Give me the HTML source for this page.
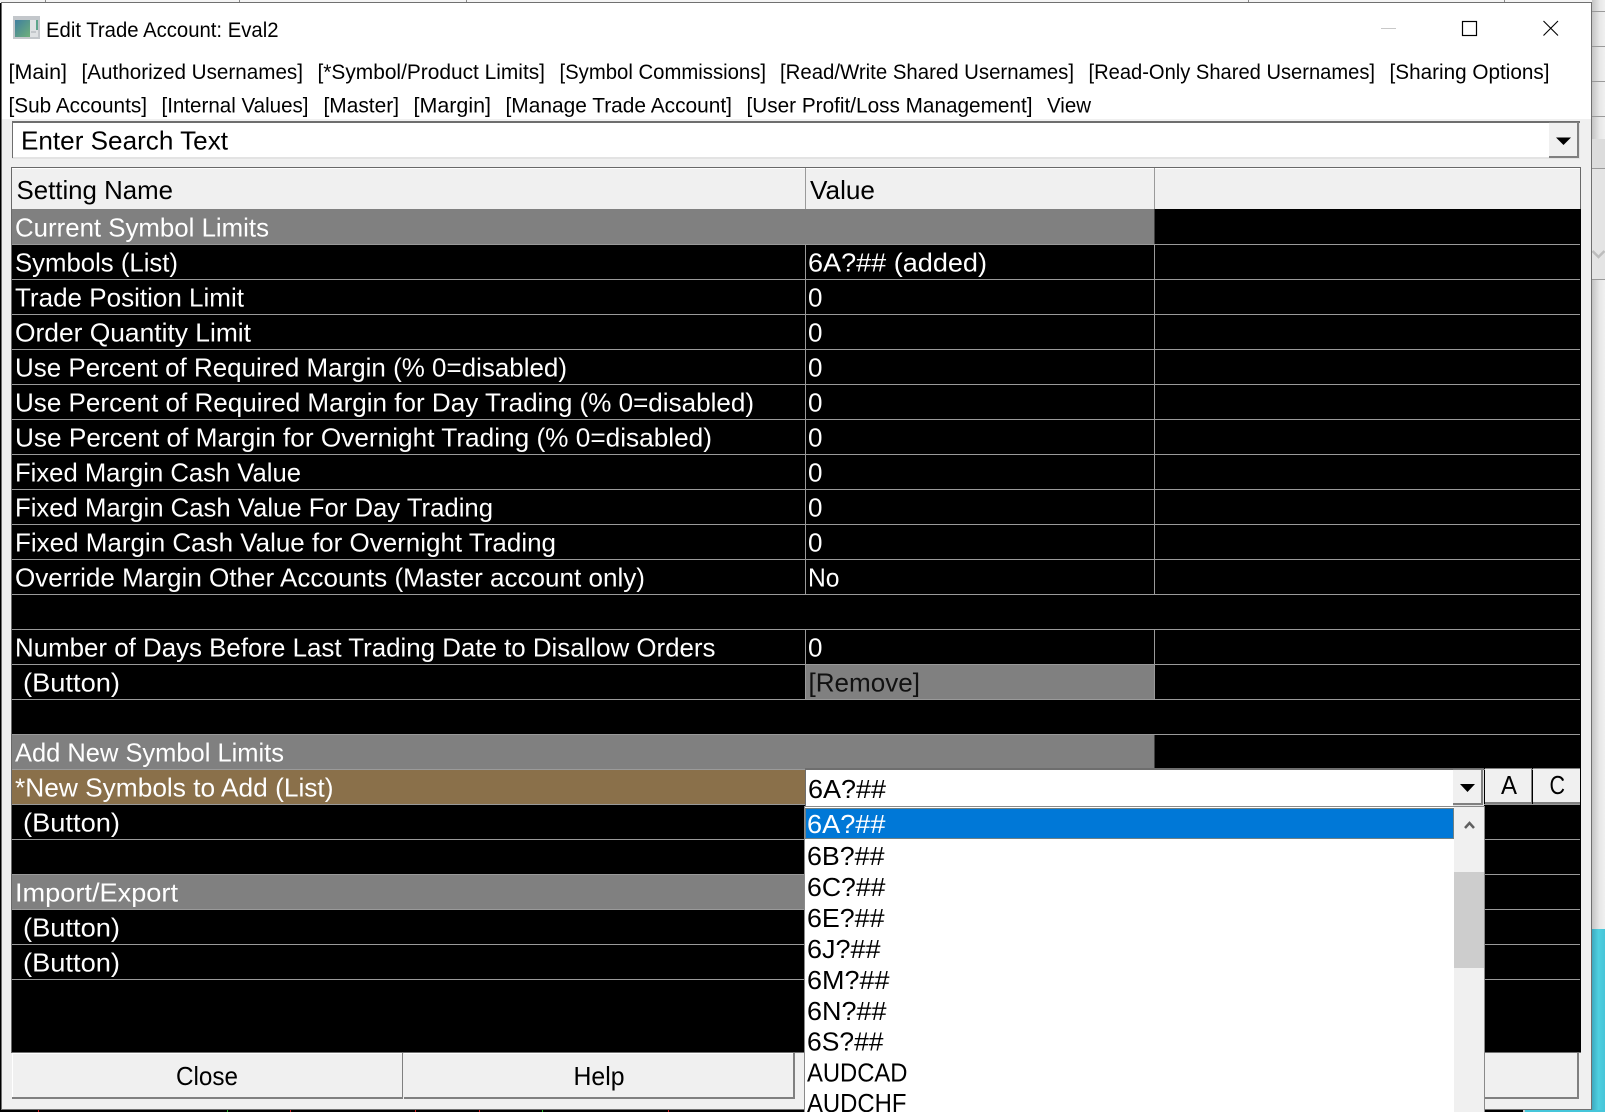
<!DOCTYPE html>
<html><head><meta charset="utf-8"><title>Edit Trade Account: Eval2</title>
<style>
html,body{margin:0;padding:0;background:#000;width:1605px;height:1112px;overflow:hidden}
svg{display:block}
text{font-family:"Liberation Sans",sans-serif;white-space:pre}
.m{font-size:21.500px;fill:#000}
.r{font-size:26px;fill:#fff}
.b{font-size:26px;fill:#000}
</style></head><body>
<svg width="1605" height="1112" viewBox="0 0 1605 1112" xmlns="http://www.w3.org/2000/svg">
<defs>
<linearGradient id="ic" x1="0" y1="0" x2="1" y2="1"><stop offset="0" stop-color="#3f7f9f"/><stop offset="1" stop-color="#6fb07a"/></linearGradient>
<linearGradient id="sh" x1="0" y1="0" x2="1" y2="0"><stop offset="0" stop-color="#c4c4c4"/><stop offset=".6" stop-color="#e8e8e8"/><stop offset="1" stop-color="#f0f0f0"/></linearGradient>
<linearGradient id="te" x1="0" y1="0" x2="1" y2="0"><stop offset="0" stop-color="#3ea9bf"/><stop offset=".5" stop-color="#4fd0e0"/><stop offset="1" stop-color="#46c4d8"/></linearGradient>
</defs>
<!-- background -->
<rect width="1605" height="1112" fill="#000"/>
<rect x="0" y="0" width="1605" height="3" fill="#f4f4f4"/>
<rect x="45" y="0" width="1" height="3" fill="#888"/><rect x="239" y="0" width="1" height="3" fill="#888"/><rect x="466" y="0" width="1" height="3" fill="#888"/><rect x="1248" y="0" width="1" height="3" fill="#888"/><rect x="1504" y="0" width="1" height="3" fill="#888"/>
<rect x="1592" y="0" width="13" height="929" fill="url(#sh)"/>
<rect x="1592" y="139" width="13" height="29" fill="#dcdcdc"/>
<rect x="1592" y="168" width="13" height="111" fill="#e4e4e4"/>
<g fill="#999"><rect x="1592" y="11" width="13" height="1"/><rect x="1592" y="46" width="13" height="1"/><rect x="1592" y="81" width="13" height="1"/><rect x="1592" y="116" width="13" height="1"/><rect x="1592" y="168" width="13" height="1"/><rect x="1592" y="279" width="13" height="1"/></g>
<path d="M1592.500 251 L1598.500 257 L1604.500 251" fill="none" stroke="#bdbdbd" stroke-width="2.500"/>
<rect x="1592" y="929" width="13" height="183" fill="url(#te)"/>
<rect x="1525" y="1110" width="80" height="2" fill="#45c6da"/>
<rect x="1523" y="1110" width="2" height="2" fill="#ccc"/>
<rect x="38" y="1110" width="1" height="2" fill="#d22"/><rect x="227" y="1110" width="1" height="2" fill="#2b2"/><rect x="290" y="1110" width="1" height="2" fill="#d22"/><rect x="415" y="1110" width="1" height="2" fill="#d22"/><rect x="479" y="1110" width="1" height="2" fill="#d22"/><rect x="542" y="1110" width="1" height="2" fill="#2b2"/><rect x="668" y="1110" width="1" height="2" fill="#d22"/>
<!-- window -->
<rect x="1" y="2" width="1591" height="1108" fill="#707070"/>
<rect x="2" y="3" width="1589" height="1106" fill="#f0f0f0"/>
<rect x="2" y="3" width="1589" height="116" fill="#fff"/>
<!-- icon -->
<rect x="13" y="16" width="27" height="23" fill="#c3c7cb"/>
<rect x="15" y="20" width="15" height="17" fill="url(#ic)"/>
<rect x="30" y="20" width="8" height="17" fill="#dfe2e4"/>
<rect x="36" y="20" width="2" height="10" fill="#5da58c"/>
<rect x="31" y="31" width="5" height="2" fill="#c3c7cb"/>
<text class="m" x="46" y="37" textLength="232.500" lengthAdjust="spacingAndGlyphs">Edit Trade Account: Eval2</text>
<!-- caption buttons -->
<rect x="1381" y="28" width="15" height="1" fill="#c8c8c8"/>
<rect x="1462.500" y="21.500" width="14" height="14" fill="none" stroke="#000" stroke-width="1.200"/>
<path d="M1543.500 21 L1558 35.500 M1558 21 L1543.500 35.500" stroke="#000" stroke-width="1.100" fill="none"/>
<!-- menus -->
<text class="m" x="8.500" y="79" textLength="58.500" lengthAdjust="spacingAndGlyphs">[Main]</text>
<text class="m" x="81.500" y="79" textLength="221.500" lengthAdjust="spacingAndGlyphs">[Authorized Usernames]</text>
<text class="m" x="317.500" y="79" textLength="227.500" lengthAdjust="spacingAndGlyphs">[*Symbol/Product Limits]</text>
<text class="m" x="559.500" y="79" textLength="206.500" lengthAdjust="spacingAndGlyphs">[Symbol Commissions]</text>
<text class="m" x="780" y="79" textLength="294" lengthAdjust="spacingAndGlyphs">[Read/Write Shared Usernames]</text>
<text class="m" x="1088.500" y="79" textLength="286.500" lengthAdjust="spacingAndGlyphs">[Read-Only Shared Usernames]</text>
<text class="m" x="1389.500" y="79" textLength="160" lengthAdjust="spacingAndGlyphs">[Sharing Options]</text>
<text class="m" x="8.500" y="112.500" textLength="138.500" lengthAdjust="spacingAndGlyphs">[Sub Accounts]</text>
<text class="m" x="161.500" y="112.500" textLength="147" lengthAdjust="spacingAndGlyphs">[Internal Values]</text>
<text class="m" x="323.500" y="112.500" textLength="75.500" lengthAdjust="spacingAndGlyphs">[Master]</text>
<text class="m" x="413.500" y="112.500" textLength="77.500" lengthAdjust="spacingAndGlyphs">[Margin]</text>
<text class="m" x="505.500" y="112.500" textLength="226.500" lengthAdjust="spacingAndGlyphs">[Manage Trade Account]</text>
<text class="m" x="746.500" y="112.500" textLength="286" lengthAdjust="spacingAndGlyphs">[User Profit/Loss Management]</text>
<text class="m" x="1047" y="112.500" textLength="44" lengthAdjust="spacingAndGlyphs">View</text>
<!-- search -->
<rect x="12" y="121" width="1568" height="38" fill="#e3e3e3"/>
<rect x="12" y="121" width="1568" height="2" fill="#6e6e6e"/>
<rect x="12" y="121" width="1" height="37" fill="#6e6e6e"/>
<rect x="13" y="123" width="1566" height="34" fill="#fff"/>
<text class="b" x="21" y="149.500" textLength="207" lengthAdjust="spacingAndGlyphs">Enter Search Text</text>
<rect x="1549" y="122" width="30" height="36" fill="#808080"/>
<rect x="1549" y="123" width="28" height="33" fill="#f0f0f0"/>
<path d="M1556 137.500 H1571 L1563.500 145 Z" fill="#000"/>
<!-- table -->
<rect x="11" y="167" width="1570" height="886" fill="#000"/>
<rect x="11" y="167" width="1570" height="1" fill="#696969"/>
<rect x="11" y="167" width="1" height="886" fill="#696969"/>
<rect x="1580" y="167" width="1" height="42" fill="#696969"/>
<rect x="12" y="168" width="1568" height="41" fill="#f0f0f0"/>
<rect x="12" y="168" width="1568" height="1" fill="#fff"/>
<rect x="805" y="168" width="1" height="41" fill="#9a9a9a"/><rect x="1154" y="168" width="1" height="41" fill="#9a9a9a"/>
<text class="b" x="16.500" y="199" textLength="156.500" lengthAdjust="spacingAndGlyphs">Setting Name</text>
<text class="b" x="810" y="199" textLength="65" lengthAdjust="spacingAndGlyphs">Value</text>
<!-- row fills -->
<rect x="12" y="209" width="1142.500" height="35" fill="#808080"/>
<rect x="12" y="734" width="1142.500" height="35" fill="#808080"/>
<rect x="12" y="874" width="1142.500" height="35" fill="#808080"/>
<rect x="12" y="769" width="793" height="35" fill="#8a704a"/>
<rect x="806" y="664" width="349" height="35" fill="#808080"/>
<!-- verticals -->
<rect x="805" y="244" width="1" height="350" fill="#9a9a9a"/><rect x="1154" y="244" width="1" height="350" fill="#9a9a9a"/>
<rect x="805" y="629" width="1" height="70" fill="#9a9a9a"/><rect x="1154" y="629" width="1" height="70" fill="#9a9a9a"/>
<!-- row lines -->
<g fill="#9a9a9a">
<rect x="12" y="244" width="1568" height="1"/><rect x="12" y="279" width="1568" height="1"/><rect x="12" y="314" width="1568" height="1"/><rect x="12" y="349" width="1568" height="1"/><rect x="12" y="384" width="1568" height="1"/><rect x="12" y="419" width="1568" height="1"/><rect x="12" y="454" width="1568" height="1"/><rect x="12" y="489" width="1568" height="1"/><rect x="12" y="524" width="1568" height="1"/><rect x="12" y="559" width="1568" height="1"/><rect x="12" y="594" width="1568" height="1"/><rect x="12" y="629" width="1568" height="1"/><rect x="12" y="664" width="1568" height="1"/><rect x="12" y="699" width="1568" height="1"/><rect x="12" y="734" width="1568" height="1"/><rect x="12" y="769" width="1568" height="1"/><rect x="12" y="804" width="1568" height="1"/><rect x="12" y="839" width="1568" height="1"/><rect x="12" y="874" width="1568" height="1"/><rect x="12" y="909" width="1568" height="1"/><rect x="12" y="944" width="1568" height="1"/><rect x="12" y="979" width="1568" height="1"/>
</g>
<!-- row labels -->
<text class="r" x="15" y="236.500" textLength="254" lengthAdjust="spacingAndGlyphs">Current Symbol Limits</text>
<text class="r" x="15" y="271.500" textLength="163" lengthAdjust="spacingAndGlyphs">Symbols (List)</text>
<text class="r" x="15" y="306.500" textLength="229" lengthAdjust="spacingAndGlyphs">Trade Position Limit</text>
<text class="r" x="15" y="341.500" textLength="236" lengthAdjust="spacingAndGlyphs">Order Quantity Limit</text>
<text class="r" x="15" y="376.500" textLength="552" lengthAdjust="spacingAndGlyphs">Use Percent of Required Margin (% 0=disabled)</text>
<text class="r" x="15" y="411.500" textLength="739" lengthAdjust="spacingAndGlyphs">Use Percent of Required Margin for Day Trading (% 0=disabled)</text>
<text class="r" x="15" y="446.500" textLength="697" lengthAdjust="spacingAndGlyphs">Use Percent of Margin for Overnight Trading (% 0=disabled)</text>
<text class="r" x="15" y="481.500" textLength="286" lengthAdjust="spacingAndGlyphs">Fixed Margin Cash Value</text>
<text class="r" x="15" y="516.500" textLength="478" lengthAdjust="spacingAndGlyphs">Fixed Margin Cash Value For Day Trading</text>
<text class="r" x="15" y="551.500" textLength="541" lengthAdjust="spacingAndGlyphs">Fixed Margin Cash Value for Overnight Trading</text>
<text class="r" x="15" y="586.500" textLength="630" lengthAdjust="spacingAndGlyphs">Override Margin Other Accounts (Master account only)</text>
<text class="r" x="15" y="656.500" textLength="700.500" lengthAdjust="spacingAndGlyphs">Number of Days Before Last Trading Date to Disallow Orders</text>
<text class="r" x="23" y="691.500" textLength="97" lengthAdjust="spacingAndGlyphs">(Button)</text>
<text class="r" x="15" y="761.500" textLength="269" lengthAdjust="spacingAndGlyphs">Add New Symbol Limits</text>
<text class="r" x="15" y="796.500" textLength="318.500" lengthAdjust="spacingAndGlyphs">*New Symbols to Add (List)</text>
<text class="r" x="23" y="831.500" textLength="97" lengthAdjust="spacingAndGlyphs">(Button)</text>
<text class="r" x="15" y="901.500" textLength="163" lengthAdjust="spacingAndGlyphs">Import/Export</text>
<text class="r" x="23" y="936.500" textLength="97" lengthAdjust="spacingAndGlyphs">(Button)</text>
<text class="r" x="23" y="971.500" textLength="97" lengthAdjust="spacingAndGlyphs">(Button)</text>
<!-- values -->
<text class="r" x="808" y="271.500" textLength="179" lengthAdjust="spacingAndGlyphs">6A?## (added)</text>
<text class="r" x="808" y="306.500">0</text><text class="r" x="808" y="341.500">0</text><text class="r" x="808" y="376.500">0</text><text class="r" x="808" y="411.500">0</text><text class="r" x="808" y="446.500">0</text><text class="r" x="808" y="481.500">0</text><text class="r" x="808" y="516.500">0</text><text class="r" x="808" y="551.500">0</text>
<text class="r" x="808" y="586.500" textLength="31.500" lengthAdjust="spacingAndGlyphs">No</text>
<text class="r" x="808" y="656.500">0</text>
<text class="b" x="808.500" y="691.500" textLength="111.500" lengthAdjust="spacingAndGlyphs" style="fill:#111">[Remove]</text>
<!-- bottom buttons -->
<rect x="11" y="1052" width="1570" height="1" fill="#707070"/>
<rect x="12" y="1053" width="391" height="46" fill="#808080"/>
<rect x="12" y="1053" width="390" height="44" fill="#f0f0f0"/>
<rect x="12" y="1053" width="390" height="1" fill="#fff"/><rect x="12" y="1053" width="1" height="44" fill="#fff"/>
<rect x="404" y="1053" width="391" height="46" fill="#808080"/>
<rect x="404" y="1053" width="389" height="44" fill="#f0f0f0"/>
<rect x="404" y="1053" width="389" height="1" fill="#fff"/>
<text class="b" x="176" y="1085" textLength="62" lengthAdjust="spacingAndGlyphs">Close</text>
<text class="b" x="573.500" y="1085" textLength="51" lengthAdjust="spacingAndGlyphs">Help</text>
<rect x="1484" y="1053" width="95" height="46" fill="#808080"/>
<rect x="1484" y="1053" width="93" height="44" fill="#f0f0f0"/>
<!-- combobox -->
<rect x="805" y="768" width="679" height="39" fill="#e3e3e3"/>
<rect x="805" y="768" width="679" height="2" fill="#6e6e6e"/>
<rect x="805" y="770" width="648" height="36" fill="#fff"/>
<rect x="805" y="768" width="1" height="38" fill="#6e6e6e"/>
<text class="b" x="808" y="798" textLength="78" lengthAdjust="spacingAndGlyphs">6A?##</text>
<rect x="1453" y="769" width="30" height="36" fill="#808080"/>
<rect x="1453" y="770" width="28" height="33" fill="#f0f0f0"/>
<path d="M1460 784 H1475 L1467.500 792 Z" fill="#000"/>
<!-- A C -->
<rect x="1485" y="768" width="47" height="36" fill="#808080"/>
<rect x="1485" y="769" width="46" height="33" fill="#f0f0f0"/>
<rect x="1533" y="768" width="47" height="36" fill="#808080"/>
<rect x="1533" y="769" width="47" height="33" fill="#f0f0f0"/>
<text class="b" x="1501" y="794" textLength="16" lengthAdjust="spacingAndGlyphs">A</text>
<text class="b" x="1549.500" y="794" textLength="15.500" lengthAdjust="spacingAndGlyphs">C</text>
<!-- dropdown list -->
<rect x="804" y="806" width="681" height="306" fill="#8a8a8a"/>
<rect x="805" y="807" width="649" height="305" fill="#fff"/>
<rect x="805" y="808" width="649" height="31" fill="#0078d7"/>
<rect x="805.500" y="808.500" width="648" height="30" fill="none" stroke="#e08a30" stroke-width="1" stroke-dasharray="1 1"/>
<rect x="1454" y="807" width="30" height="305" fill="#f0f0f0"/>
<rect x="1454" y="872" width="30" height="96" fill="#cdcdcd"/>
<path d="M1465 828 L1469.500 823 L1474 828" fill="none" stroke="#606060" stroke-width="2.500"/>
<text class="r" x="807" y="833" textLength="78.500" lengthAdjust="spacingAndGlyphs">6A?##</text>
<text class="b" x="807" y="865" textLength="77.500" lengthAdjust="spacingAndGlyphs">6B?##</text>
<text class="b" x="807" y="896" textLength="78.500" lengthAdjust="spacingAndGlyphs">6C?##</text>
<text class="b" x="807" y="927" textLength="77.500" lengthAdjust="spacingAndGlyphs">6E?##</text>
<text class="b" x="807" y="958" textLength="73.500" lengthAdjust="spacingAndGlyphs">6J?##</text>
<text class="b" x="807" y="989" textLength="82.500" lengthAdjust="spacingAndGlyphs">6M?##</text>
<text class="b" x="807" y="1020" textLength="79.500" lengthAdjust="spacingAndGlyphs">6N?##</text>
<text class="b" x="807" y="1050.500" textLength="76.500" lengthAdjust="spacingAndGlyphs">6S?##</text>
<text class="b" x="807" y="1081.500" textLength="100.500" lengthAdjust="spacingAndGlyphs">AUDCAD</text>
<text class="b" x="807" y="1112" textLength="99.500" lengthAdjust="spacingAndGlyphs">AUDCHF</text>
</svg>
</body></html>
